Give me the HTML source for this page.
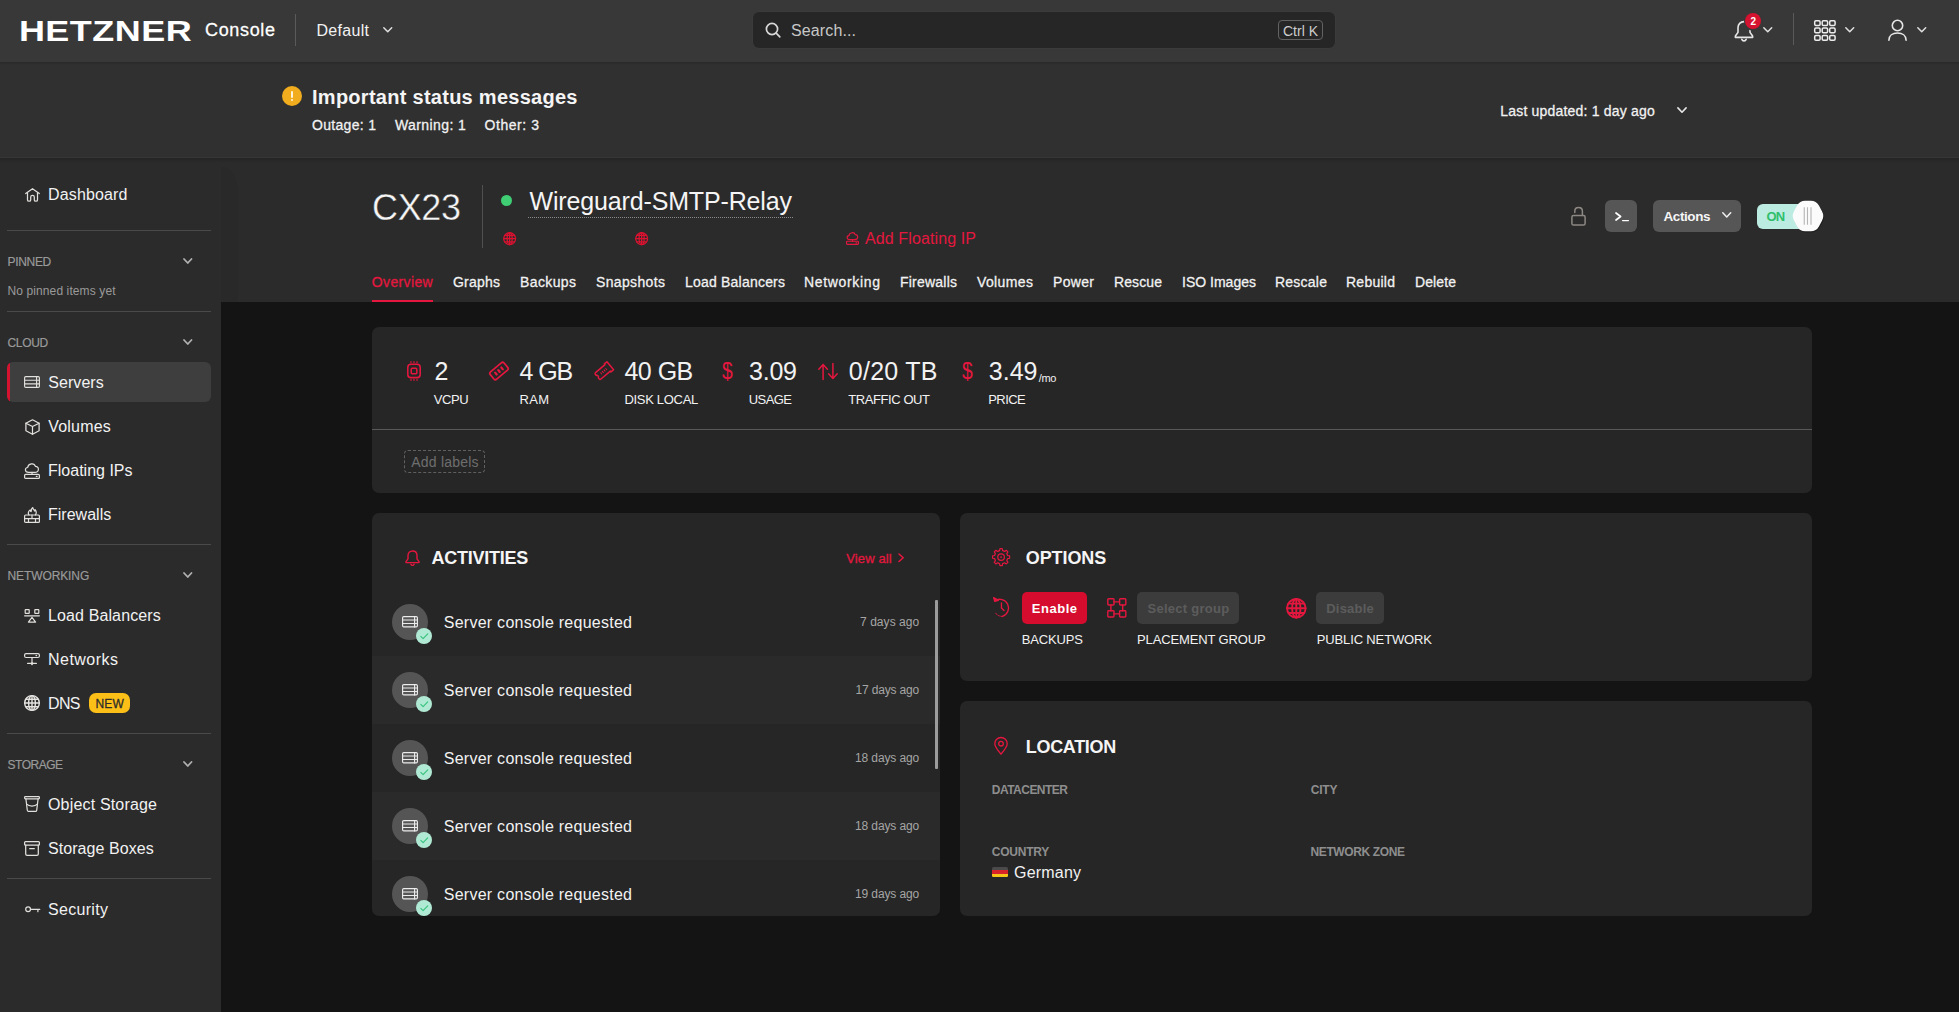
<!DOCTYPE html>
<html lang="en">
<head>
<meta charset="utf-8">
<title>Hetzner Console</title>
<style>
*{box-sizing:border-box;margin:0;padding:0}
html,body{width:1959px;height:1012px;overflow:hidden;background:#141414}
body{font-family:"Liberation Sans",Arial,sans-serif;color:#f2f2f2;position:relative}
.a,.t{position:absolute;white-space:pre}
.t{line-height:1}
svg{position:absolute;overflow:visible;fill:none;stroke-linecap:round;stroke-linejoin:round}
.hr{position:absolute;left:7px;width:204px;height:1px;background:#4a4a4a}
.card{position:absolute;background:#262626;border-radius:7px}
.row{position:absolute;left:372px;width:568px;height:68px}
.av{position:absolute;left:392px;width:36px;height:36px;border-radius:18px;background:#555}
.bd{position:absolute;left:416px;width:16px;height:16px;border-radius:8px;background:#b0ead5}
.btn{position:absolute;height:32px;top:592px;border-radius:5px}
</style>
</head>
<body>
<!-- backgrounds -->
<div class="a" style="left:0;top:0;width:1959px;height:62px;background:#383838"></div>
<div class="a" style="left:0;top:62px;width:1959px;height:96px;background:#303030"></div>
<div class="a" style="left:0;top:62px;width:1959px;height:3px;background:linear-gradient(rgba(0,0,0,.16),rgba(0,0,0,0))"></div>
<div class="a" style="left:0;top:158px;width:1959px;height:144px;background:#2b2b2b"></div>
<div class="a" style="left:0;top:158px;width:221px;height:854px;background:#2b2b2b"></div>
<div class="a" style="left:0;top:158px;width:1959px;height:5px;background:linear-gradient(rgba(0,0,0,.16),rgba(0,0,0,0))"></div>
<div class="a" style="left:221px;top:166.500px;width:16.700px;height:135.500px;background:#292929;border-top-right-radius:16px 26px"></div>

<div class="a" style="left:0;top:157px;width:1959px;height:1px;background:#363636"></div>
<!-- TOPBAR -->
<svg style="left:0;top:0" width="220" height="61" viewBox="0 0 220 61"><text x="0" y="0" transform="translate(18.9 40.7) scale(1.184 1)" font-family="Liberation Sans, Arial, sans-serif" font-size="30.4" font-weight="bold" letter-spacing=".4" fill="#fff" stroke="none">HETZNER</text></svg>
<div class="a" style="left:295px;top:14px;width:1px;height:32px;background:#5a5a5a"></div>
<svg style="left:382.5px;top:27px" width="9.5" height="5.5" viewBox="0 0 9.5 5.5"><path d="M.8 .8l3.95 3.9L8.7 .8" stroke="#e0e0e0" stroke-width="1.5"/></svg>
<div class="a" style="left:753px;top:12px;width:582px;height:36px;background:#262626;border-radius:6px;box-shadow:0 0 0 .5px #3e3e3e"></div>
<svg style="left:765px;top:22px" width="16" height="16" viewBox="0 0 16 16"><circle cx="7" cy="7" r="5.6" stroke="#d8d8d8" stroke-width="1.7"/><path d="M11.2 11.2L14.8 14.8" stroke="#d8d8d8" stroke-width="1.7"/></svg>
<div class="a" style="left:1278px;top:20px;width:45px;height:20px;border:1px solid #626262;border-radius:4px"></div>
<!-- bell -->
<svg style="left:1734px;top:20px" width="20" height="22" viewBox="0 0 20 22"><path d="M10 1.6c-3.6 0-6 2.7-6 6.2v4.6L1.4 16v1.4h17.2V16L16 12.4V7.8c0-3.5-2.400-6.200-6-6.200z" stroke="#e6e6e6" stroke-width="1.6"/><path d="M7.8 19.200a2.300 2.300 0 0 0 4.400 0" stroke="#e6e6e6" stroke-width="1.6"/></svg>
<div class="a" style="left:1743.5px;top:11.500px;width:19px;height:19px;border-radius:10px;background:#383838"></div>
<div class="a" style="left:1745.200px;top:13px;width:15.600px;height:15.600px;border-radius:8px;background:#d5122f"></div>
<svg style="left:1763px;top:27px" width="9.5" height="5.5" viewBox="0 0 9.5 5.5"><path d="M.8 .8l3.950 3.900L8.700 .8" stroke="#e0e0e0" stroke-width="1.500"/></svg>
<div class="a" style="left:1793px;top:13px;width:1px;height:32px;background:#5a5a5a"></div>
<!-- grid -->
<svg style="left:1814px;top:19.500px" width="22" height="21" viewBox="0 0 22 21" stroke="#ececec" stroke-width="1.500">
<rect x=".7" y=".7" width="5.400" height="4.700" rx="1.200"/><rect x="8.200" y=".7" width="5.400" height="4.700" rx="1.200"/><rect x="15.700" y=".7" width="5.400" height="4.700" rx="1.200"/>
<rect x=".7" y="8.100" width="5.400" height="4.700" rx="1.200"/><rect x="8.200" y="8.100" width="5.400" height="4.700" rx="1.200"/><rect x="15.700" y="8.100" width="5.400" height="4.700" rx="1.200"/>
<rect x=".7" y="15.500" width="5.400" height="4.700" rx="1.200"/><rect x="8.200" y="15.500" width="5.400" height="4.700" rx="1.200"/><rect x="15.700" y="15.500" width="5.400" height="4.700" rx="1.200"/>
</svg>
<svg style="left:1844.500px;top:27px" width="9.5" height="5.5" viewBox="0 0 9.5 5.5"><path d="M.8 .8l3.950 3.900L8.700 .8" stroke="#e0e0e0" stroke-width="1.500"/></svg>
<!-- user -->
<svg style="left:1888px;top:18.500px" width="19" height="22" viewBox="0 0 19 22" stroke="#e6e6e6" stroke-width="1.600"><circle cx="9.500" cy="6.500" r="5.200"/><path d="M.9 21.200c0-4.600 3.800-7.200 8.600-7.200s8.600 2.600 8.600 7.200"/></svg>
<svg style="left:1916.500px;top:27px" width="9.5" height="5.5" viewBox="0 0 9.5 5.5"><path d="M.8 .8l3.950 3.900L8.700 .8" stroke="#e0e0e0" stroke-width="1.500"/></svg>

<!-- STATUS -->
<div class="a" style="left:282px;top:86px;width:20px;height:20px;border-radius:10px;background:#f2ad1e"></div>
<div class="a" style="left:291px;top:90.500px;width:2px;height:7px;background:#fff4d8;border-radius:1px"></div>
<div class="a" style="left:291px;top:99px;width:2px;height:2px;background:#fff4d8;border-radius:1px"></div>
<svg style="left:1677px;top:106.500px" width="10" height="6.500" viewBox="0 0 10 6.500"><path d="M.9 .9l4.100 4.300L9.100 .9" stroke="#e6e6e6" stroke-width="1.600"/></svg>

<!-- SIDEBAR -->
<div class="hr" style="top:230px"></div>
<div class="hr" style="top:311px"></div>
<div class="hr" style="top:544px"></div>
<div class="hr" style="top:733px"></div>
<div class="hr" style="top:878px"></div>
<div class="a" style="left:7px;top:362px;width:204px;height:40px;background:#3e3e3e;border-radius:6px;overflow:hidden"><div class="a" style="left:0;top:0;width:3px;height:40px;background:#d5122f"></div></div>
<div class="a" style="left:89px;top:692.800px;width:41px;height:20.200px;background:#fbbf18;border-radius:7px"></div>
<!-- section chevrons -->
<svg style="left:182.500px;top:257.700px" width="9.500" height="6.500" viewBox="0 0 9.500 6.500"><path d="M1 1l3.750 4L8.500 1" stroke="#b0b0b0" stroke-width="1.800"/></svg>
<svg style="left:182.500px;top:338.700px" width="9.500" height="6.500" viewBox="0 0 9.500 6.500"><path d="M1 1l3.750 4L8.500 1" stroke="#b0b0b0" stroke-width="1.800"/></svg>
<svg style="left:182.500px;top:571.700px" width="9.500" height="6.500" viewBox="0 0 9.500 6.500"><path d="M1 1l3.750 4L8.500 1" stroke="#b0b0b0" stroke-width="1.800"/></svg>
<svg style="left:182.500px;top:760.700px" width="9.500" height="6.500" viewBox="0 0 9.500 6.500"><path d="M1 1l3.750 4L8.500 1" stroke="#b0b0b0" stroke-width="1.800"/></svg>
<!-- home -->
<svg style="left:24.500px;top:187.500px" width="15" height="14" viewBox="0 0 15 14" stroke="#e2e0dd" stroke-width="1.250"><path d="M.7 5.600L7.500 .7l6.800 4.900"/><path d="M2.500 4.900v7c0 1.700 3.200 1.700 3.200 0V9c0-2.200 3.600-2.200 3.600 0v2.900c0 1.700 3.200 1.700 3.200 0v-7"/></svg>
<!-- servers -->
<svg style="left:24px;top:376px" width="16" height="12" viewBox="0 0 16 12" stroke="#e2e0dd" stroke-width="1.150"><rect x=".6" y=".6" width="14.800" height="10.800" rx="1.200"/><path d="M.6 4.200h14.800M.6 7.800h14.800M12.600 .6v10.800"/></svg>
<!-- volumes cube -->
<svg style="left:24.500px;top:418.500px" width="15" height="16" viewBox="0 0 15 16" stroke="#e2e0dd" stroke-width="1.250"><path d="M7.500 .8l6.600 3.400v7.600l-6.600 3.400-6.600-3.400V4.200z"/><path d="M.9 4.200l6.600 3.300 6.600-3.300M7.500 7.500v7.700"/></svg>
<!-- floating ip -->
<svg style="left:24px;top:462.500px" width="16" height="16" viewBox="0 0 16 16" stroke="#e2e0dd" stroke-width="1.200"><path d="M4.600 9.400c-4.200 0-4-4.600-.9-4.900C4.200 .3 10.200-.6 11.400 3.300c4.200.4 4 6.100-.6 6.100z"/><path d="M8 9.400v2"/><rect x=".6" y="11.400" width="14.800" height="4" rx="1"/><path d="M12.300 13.400h.8"/></svg>
<!-- firewall -->
<svg style="left:24px;top:506.500px" width="16" height="16" viewBox="0 0 16 16" stroke="#e2e0dd" stroke-width="1.200"><path d="M5 8c-1.700-2.600.2-4.400 1.100-5.100.1 1 .6 1.500 1.100 1.700C7.100 3 7.700 1.400 8.800.6c.1 1.700 1.300 2.300 1.900 3.500.3-.4.400-.9.400-1.400 1.300 1.500 1.500 3.500.3 5.300"/><rect x=".6" y="8" width="14.800" height="7.400" rx="1"/><path d="M.6 11.700h14.800M8 8v3.700M4.500 11.700v3.700M11.500 11.700v3.700"/></svg>
<!-- load balancer -->
<svg style="left:24px;top:608.500px" width="16" height="14" viewBox="0 0 16 14" stroke="#e2e0dd" stroke-width="1.200"><rect x="1.200" y=".6" width="4" height="3.800" rx=".5"/><rect x="10.800" y=".6" width="4" height="3.800" rx=".5"/><path d="M.6 6.800h14.800M8 8.400l3.600 4.700H4.400z"/></svg>
<!-- networks -->
<svg style="left:24px;top:653px" width="16" height="13" viewBox="0 0 16 13" stroke="#e2e0dd" stroke-width="1.200"><rect x=".6" y=".6" width="14.800" height="3.900" rx="1.500"/><path d="M12 2.550h.6M8 4.500v5.800M3.600 10.400h8.800M6.900 10.400l1.100-1.100 1.100 1.100-1.100 1.100z"/></svg>
<!-- dns globe -->
<svg style="left:24px;top:694.800px" width="16" height="16" viewBox="0 0 16 16" stroke="#e6e4e1" stroke-width="1.400"><circle cx="8" cy="8" r="7.350"/><ellipse cx="8" cy="8" rx="3.400" ry="7.350"/><path d="M8 .6v14.800M.6 8h14.800M1.700 4.300h12.600M1.700 11.700h12.600"/></svg>
<!-- bucket -->
<svg style="left:24px;top:796px" width="16" height="16" viewBox="0 0 16 16" stroke="#e2e0dd" stroke-width="1.200"><rect x=".6" y=".6" width="14.800" height="2.300" rx=".8"/><path d="M1.900 2.900l1.400 11.400c.1.700.5 1.100 1.200 1.100h7c.7 0 1.100-.4 1.200-1.100l1.400-11.400"/><path d="M2.600 8.200c2.600 2.600 8.200 2.600 10.800 0"/></svg>
<!-- box -->
<svg style="left:24px;top:840.500px" width="16" height="15" viewBox="0 0 16 15" stroke="#e2e0dd" stroke-width="1.250"><rect x=".6" y=".6" width="14.800" height="3.600" rx="1"/><path d="M1.700 4.200v8.700c0 .9.500 1.400 1.400 1.400h9.800c.9 0 1.400-.5 1.400-1.400V4.200M5.700 7.700h4.600"/></svg>
<!-- key -->
<svg style="left:24.500px;top:905.500px" width="16" height="7" viewBox="0 0 16 7" stroke="#e2e0dd" stroke-width="1.200"><circle cx="3.100" cy="3.300" r="2.400"/><path d="M5.500 3.300h9.300M12.900 3.300v2.400"/></svg>

<!-- MAIN HEADER -->
<div class="a" style="left:482px;top:185px;width:1px;height:62.500px;background:#505050"></div>
<div class="a" style="left:500.900px;top:194.800px;width:11.400px;height:11.400px;border-radius:6px;background:#3fce74"></div>
<div class="a" style="left:528px;top:217px;width:265px;height:0;border-top:1px dotted #8c8c8c"></div>
<!-- red globes -->
<svg style="left:502.900px;top:231.900px" width="13.300" height="13.300" viewBox="0 0 13.300 13.300" stroke="#dc1230" stroke-width="1.250"><circle cx="6.650" cy="6.650" r="5.900"/><ellipse cx="6.650" cy="6.650" rx="2.500" ry="5.900"/><path d="M6.650 .7v11.900M.7 6.650h11.900M1.600 3.500h10.100M1.600 9.800h10.100"/></svg>
<svg style="left:634.900px;top:231.900px" width="13.300" height="13.300" viewBox="0 0 13.300 13.300" stroke="#dc1230" stroke-width="1.250"><circle cx="6.650" cy="6.650" r="5.900"/><ellipse cx="6.650" cy="6.650" rx="2.500" ry="5.900"/><path d="M6.650 .7v11.900M.7 6.650h11.900M1.600 3.500h10.100M1.600 9.800h10.100"/></svg>
<!-- add floating ip icon -->
<svg style="left:846px;top:232px" width="13" height="13" viewBox="0 0 16 16" stroke="#e5173f" stroke-width="1.400"><path d="M4.600 9.400c-4.200 0-4-4.600-.9-4.900C4.200 .3 10.200-.6 11.400 3.300c4.200.4 4 6.100-.6 6.100z"/><path d="M8 9.400v2"/><rect x=".7" y="11.400" width="14.600" height="3.900" rx="1"/><path d="M12.300 13.400h.8"/></svg>
<!-- active tab underline -->
<div class="a" style="left:372px;top:300px;width:61px;height:2px;background:#e5173f"></div>
<!-- lock -->
<svg style="left:1571px;top:206px" width="15" height="20" viewBox="0 0 15 20" stroke="#8d8884" stroke-width="1.500"><rect x=".9" y="9.600" width="13.200" height="9.500" rx="1.600"/><path d="M11.400 9.600V5.200C11.400 .3 3.800 .3 3.800 5.200v1.200"/></svg>
<!-- console button -->
<div class="a" style="left:1605px;top:200px;width:32px;height:32px;background:#565656;border-radius:6px"></div>
<svg style="left:1615px;top:211.500px" width="14" height="10" viewBox="0 0 14 10" stroke="#ffffff" stroke-width="1.700" stroke-linecap="butt" stroke-linejoin="miter"><path d="M1 1l4.600 3.500L1 8"/><path d="M7.600 8.600h5.800" stroke-width="1.400"/></svg>
<!-- actions button -->
<div class="a" style="left:1653px;top:200px;width:88px;height:32px;background:#565656;border-radius:6px"></div>
<svg style="left:1721.500px;top:212.300px" width="9.500" height="6" viewBox="0 0 9.500 6"><path d="M.8 .8l3.950 4.100L8.700 .8" stroke="#f0f0f0" stroke-width="1.500"/></svg>
<!-- toggle -->
<div class="a" style="left:1756.500px;top:204px;width:62px;height:24.500px;background:#bcebe1;border-radius:6px"></div>
<svg style="left:1787.75px;top:196.75px" width="40" height="38" viewBox="0 0 40 38"><path d="M33.97 14.17Q36.60 19.00 33.97 23.83L30.93 29.41Q28.30 34.24 22.80 34.24L17.20 34.24Q11.70 34.24 9.07 29.41L6.03 23.83Q3.40 19.00 6.03 14.17L9.07 8.59Q11.70 3.76 17.20 3.76L22.80 3.76Q28.30 3.76 30.93 8.59z" fill="rgba(0,0,0,.28)" transform="translate(.8 1.2)"/><path d="M33.97 14.17Q36.60 19.00 33.97 23.83L30.93 29.41Q28.30 34.24 22.80 34.24L17.20 34.24Q11.70 34.24 9.07 29.41L6.03 23.83Q3.40 19.00 6.03 14.17L9.07 8.59Q11.70 3.76 17.20 3.76L22.80 3.76Q28.30 3.76 30.93 8.59z" fill="#fbfbfb"/><path d="M16.250 10.300v17.400M19.500 10.300v17.400M23 10.300v17.400" stroke="#b5b5b5" stroke-width="1.100" stroke-linecap="butt"/></svg>

<!-- STATS CARD -->
<div class="card" style="left:372px;top:327px;width:1440px;height:165.500px"></div>
<div class="a" style="left:372px;top:429px;width:1440px;height:1px;background:#585858"></div>
<div class="a" style="left:404px;top:450px;width:81px;height:23px;border:1px dashed #606060;border-radius:4px"></div>
<!-- cpu -->
<svg style="left:407px;top:361px" width="14" height="20" viewBox="0 0 14 20" stroke="#e5173f" stroke-width="1.550"><rect x=".8" y="3.200" width="12.400" height="13.400" rx="3.200"/><rect x="4.200" y="7.200" width="5.600" height="5.600" rx="1"/><path d="M4 .6v1.200M7 .6v1.200M10 .6v1.200M4 18.200v1.200M7 18.200v1.200M10 18.200v1.200" stroke-width="1.100"/></svg>
<!-- ram -->
<svg style="left:489px;top:360.900px" width="20" height="20" viewBox="0 0 20 20" stroke="#e5173f" stroke-width="1.700"><g transform="rotate(-40 10 10)"><rect x="1" y="5.200" width="18" height="9.600" rx="2"/><path d="M6 8.800v2.400M10 8.800v2.400M14 8.800v2.400" stroke-width="2.200"/></g></svg>
<!-- disk -->
<svg style="left:594px;top:361px" width="20" height="20" viewBox="0 0 20 20" stroke="#e5173f" stroke-width="1.500"><g transform="rotate(-40 10 10)"><path d="M2.500 5.800h12.300v-1h3.400v10.400h-3.400v-1H2.500c-.8 0-1.300-.5-1.300-1.300v-1.300c1.500-.4 1.500-2.800 0-3.200V7.100c0-.8.500-1.300 1.300-1.300z"/><path d="M6.300 9.200v1.600M8.500 9.200v1.600M10.700 9.200v1.600M12.900 9.200v1.600" stroke-width="1"/></g></svg>
<span class="t" style="left:722.2px;top:359px;font-size:24px;color:#e5173f;transform:scaleX(.8);transform-origin:0 0">$</span>
<span class="t" style="left:962.2px;top:359px;font-size:24px;color:#e5173f;transform:scaleX(.8);transform-origin:0 0">$</span>
<!-- arrows -->
<svg style="left:818px;top:362.500px" width="20" height="17" viewBox="0 0 20 17" stroke="#e5173f" stroke-width="1.500" stroke-linecap="butt" stroke-linejoin="miter"><path d="M5.100 16.500V1.600M.8 6.200l4.300-4.600 4.300 4.600"/><path d="M14.900 .5v14.900M10.600 10.800l4.300 4.600 4.300-4.600"/></svg>

<!-- ACTIVITIES CARD -->
<div class="card" style="left:372px;top:512.500px;width:567.500px;height:403px;overflow:hidden"></div>
<div class="row" style="top:656px;background:#2a2a2a;width:567.500px"></div>
<div class="row" style="top:792px;background:#2a2a2a;width:567.500px"></div>
<div class="a" style="left:935px;top:600px;width:2.500px;height:168.500px;background:#9c9c9c;border-radius:1px"></div>
<!-- bell red -->
<svg style="left:404.500px;top:550px" width="15" height="16" viewBox="0 0 15 16" stroke="#e5173f" stroke-width="1.400"><path d="M7.500 1c-2.700 0-4.500 2-4.500 4.600v3.300L1 11.600v1h13v-1l-2-2.700V5.600C12 3 10.200 1 7.500 1z"/><path d="M5.900 14.200a1.700 1.700 0 0 0 3.200 0"/></svg>
<svg style="left:898.200px;top:553.200px" width="6.500" height="9.500" viewBox="0 0 6.500 9.500"><path d="M1 1l4.200 3.750L1 8.500" stroke="#e5173f" stroke-width="1.600"/></svg>
<!-- activity rows -->
<div class="av" style="top:603.75px"></div>
<svg style="left:402px;top:616.15px" width="16" height="11.500" viewBox="0 0 16 11.500" stroke="#ececec" stroke-width="1.150"><rect x=".6" y=".6" width="14.800" height="10.300" rx="1.200"/><path d="M.6 4h14.800M.6 7.500h14.800M12.600 .6v10.300"/></svg>
<div class="bd" style="top:628.00px"></div>
<svg style="left:419.800px;top:633.15px" width="8.500" height="6.500" viewBox="0 0 8.500 6.500"><path d="M.8 3.400l2.300 2.200L7.700 .9" stroke="#35c27a" stroke-width="1.100"/></svg>
<div class="av" style="top:671.75px"></div>
<svg style="left:402px;top:684.15px" width="16" height="11.500" viewBox="0 0 16 11.500" stroke="#ececec" stroke-width="1.150"><rect x=".6" y=".6" width="14.800" height="10.300" rx="1.200"/><path d="M.6 4h14.800M.6 7.500h14.800M12.600 .6v10.300"/></svg>
<div class="bd" style="top:696.00px"></div>
<svg style="left:419.800px;top:701.15px" width="8.500" height="6.500" viewBox="0 0 8.500 6.500"><path d="M.8 3.400l2.300 2.200L7.700 .9" stroke="#35c27a" stroke-width="1.100"/></svg>
<div class="av" style="top:739.75px"></div>
<svg style="left:402px;top:752.15px" width="16" height="11.500" viewBox="0 0 16 11.500" stroke="#ececec" stroke-width="1.150"><rect x=".6" y=".6" width="14.800" height="10.300" rx="1.200"/><path d="M.6 4h14.800M.6 7.500h14.800M12.600 .6v10.300"/></svg>
<div class="bd" style="top:764.00px"></div>
<svg style="left:419.800px;top:769.15px" width="8.500" height="6.500" viewBox="0 0 8.500 6.500"><path d="M.8 3.400l2.300 2.200L7.700 .9" stroke="#35c27a" stroke-width="1.100"/></svg>
<div class="av" style="top:807.75px"></div>
<svg style="left:402px;top:820.15px" width="16" height="11.500" viewBox="0 0 16 11.500" stroke="#ececec" stroke-width="1.150"><rect x=".6" y=".6" width="14.800" height="10.300" rx="1.200"/><path d="M.6 4h14.800M.6 7.500h14.800M12.600 .6v10.300"/></svg>
<div class="bd" style="top:832.00px"></div>
<svg style="left:419.800px;top:837.15px" width="8.500" height="6.500" viewBox="0 0 8.500 6.500"><path d="M.8 3.400l2.300 2.200L7.700 .9" stroke="#35c27a" stroke-width="1.100"/></svg>
<div class="av" style="top:875.75px"></div>
<svg style="left:402px;top:888.15px" width="16" height="11.500" viewBox="0 0 16 11.500" stroke="#ececec" stroke-width="1.150"><rect x=".6" y=".6" width="14.800" height="10.300" rx="1.200"/><path d="M.6 4h14.800M.6 7.500h14.800M12.600 .6v10.300"/></svg>
<div class="bd" style="top:900.00px"></div>
<svg style="left:419.800px;top:905.15px" width="8.500" height="6.500" viewBox="0 0 8.500 6.500"><path d="M.8 3.400l2.300 2.200L7.700 .9" stroke="#35c27a" stroke-width="1.100"/></svg>

<!-- OPTIONS CARD -->
<div class="card" style="left:960px;top:512.500px;width:852px;height:168px"></div>
<svg style="left:991.900px;top:547.900px" width="18.200" height="18.200" viewBox="0 0 18.200 18.200" stroke="#e5173f" stroke-width="1.200"><path d="M7.54 2.59L7.96 0.58L10.24 0.58L10.66 2.59L12.60 3.39L14.32 2.26L15.94 3.88L14.81 5.60L15.61 7.54L17.62 7.96L17.62 10.24L15.61 10.66L14.81 12.60L15.94 14.32L14.32 15.94L12.60 14.81L10.66 15.61L10.24 17.62L7.96 17.62L7.54 15.61L5.60 14.81L3.88 15.94L2.26 14.32L3.39 12.60L2.59 10.66L0.58 10.24L0.58 7.96L2.59 7.54L3.39 5.60L2.26 3.88L3.88 2.26L5.60 3.39z"/><circle cx="9.100" cy="9.100" r="3.300"/><circle cx="9.100" cy="9.100" r=".9" fill="#e5173f" stroke="none"/></svg>
<!-- backups history icon -->
<svg style="left:991.900px;top:596.400px" width="19.800" height="22" viewBox="0 0 18 20" stroke="#e5173f" stroke-width="1.250"><path d="M2.600 4.300A8 8 0 1 1 9.400 18.600"/><path d="M9.400 18.600A8 8 0 0 1 3 15.300" stroke-width=".9" stroke-dasharray="1.500 1.200"/><path d="M1.500 1.500l1 3.300 3.300-.8z" fill="#e5173f"/><path d="M8.600 6.300v4.600l2.300 2.300"/></svg>
<div class="btn" style="left:1022px;width:65px;background:#d50c2d"></div>
<!-- placement icon -->
<svg style="left:1107.300px;top:598.200px" width="19.600" height="19.800" viewBox="0 0 19.600 19.800" stroke="#e5173f" stroke-width="1.400"><rect x=".8" y=".8" width="6.200" height="6.200" rx=".8"/><rect x="12.600" y=".8" width="6.200" height="6.200" rx=".8"/><rect x=".8" y="12.800" width="6.200" height="6.200" rx=".8"/><rect x="12.600" y="12.800" width="6.200" height="6.200" rx=".8"/><path d="M7 3.900h5.600M7 15.900h5.600M3.900 7v5.800M15.700 7v5.800"/></svg>
<div class="btn" style="left:1137px;width:102px;background:#3c3c3c"></div>
<!-- public network globe -->
<svg style="left:1285.700px;top:597.700px" width="20.600" height="20.600" viewBox="0 0 20.600 20.600" stroke="#e5173f" stroke-width="1.900"><circle cx="10.300" cy="10.300" r="9.300"/><ellipse cx="10.300" cy="10.300" rx="4.200" ry="9.300"/><path d="M10.300 1v18.600M1 10.300h18.600M2.400 5.600h15.800M2.400 15h15.800"/></svg>
<div class="btn" style="left:1316.300px;width:67.500px;background:#3c3c3c"></div>

<!-- LOCATION CARD -->
<div class="card" style="left:960px;top:701px;width:852px;height:214.500px"></div>
<svg style="left:993.700px;top:736.700px" width="14" height="18" viewBox="0 0 14 18" stroke="#e5173f" stroke-width="1.300"><path d="M7 17.200C3.200 12.600.8 9.700.8 6.700a6.200 6.200 0 0 1 12.400 0c0 3-2.400 5.900-6.200 10.500z"/><circle cx="7" cy="6.700" r="2.300"/></svg>
<!-- flag -->
<div class="a" style="left:992px;top:866.500px;width:16px;height:10.500px;border-radius:1.500px;overflow:hidden;background:#4a4a4a"><div class="a" style="left:0;top:3.500px;width:16px;height:3.500px;background:#d8232a"></div><div class="a" style="left:0;top:7px;width:16px;height:3.500px;background:#f5c518"></div></div>
<!-- clip below activities card -->
<div class="a" style="left:372px;top:915.500px;width:568px;height:8px;background:#141414"></div>

<!-- text -->
<span class="t" style="left:205.00px;top:21.01px;font-size:18px;color:#ffffff;letter-spacing:0.659px;-webkit-text-stroke:.27px #ffffff">Console</span>
<span class="t" style="left:316.50px;top:22.51px;font-size:16px;color:#f2f2f2;letter-spacing:0.299px">Default</span>
<span class="t" style="left:791.00px;top:22.51px;font-size:16px;color:#c8c8c8;letter-spacing:0.121px">Search...</span>
<span class="t" style="left:1283.00px;top:24.01px;font-size:14px;color:#cccccc;letter-spacing:0.000px">Ctrl K</span>
<span class="t" style="left:1750.50px;top:16.51px;font-size:10px;color:#ffffff;letter-spacing:0.000px;font-weight:bold">2</span>
<span class="t" style="left:312.00px;top:87.01px;font-size:20px;color:#f5f5f5;letter-spacing:0.271px;font-weight:bold">Important status messages</span>
<span class="t" style="left:312.00px;top:118.01px;font-size:14px;color:#f2f2f2;letter-spacing:0.312px;-webkit-text-stroke:.27px #f2f2f2">Outage: 1</span>
<span class="t" style="left:395.00px;top:118.01px;font-size:14px;color:#f2f2f2;letter-spacing:0.396px;-webkit-text-stroke:.27px #f2f2f2">Warning: 1</span>
<span class="t" style="left:484.50px;top:118.01px;font-size:14px;color:#f2f2f2;letter-spacing:0.558px;-webkit-text-stroke:.27px #f2f2f2">Other: 3</span>
<span class="t" style="left:1500.25px;top:104.01px;font-size:14px;color:#f2f2f2;letter-spacing:0.194px;-webkit-text-stroke:.27px #f2f2f2">Last updated: 1 day ago</span>
<span class="t" style="left:48.00px;top:186.51px;font-size:16px;color:#f2f2f2;letter-spacing:0.152px">Dashboard</span>
<span class="t" style="left:7.50px;top:256.01px;font-size:12px;color:#9a9a9a;letter-spacing:-0.319px;-webkit-text-stroke:.18px #9a9a9a">PINNED</span>
<span class="t" style="left:7.50px;top:285.01px;font-size:12px;color:#9a9a9a;letter-spacing:0.108px">No pinned items yet</span>
<span class="t" style="left:7.50px;top:337.01px;font-size:12px;color:#9a9a9a;letter-spacing:-0.316px;-webkit-text-stroke:.18px #9a9a9a">CLOUD</span>
<span class="t" style="left:48.25px;top:374.51px;font-size:16px;color:#f2f2f2;letter-spacing:0.062px">Servers</span>
<span class="t" style="left:48.25px;top:418.51px;font-size:16px;color:#f2f2f2;letter-spacing:0.188px">Volumes</span>
<span class="t" style="left:48.00px;top:462.51px;font-size:16px;color:#f2f2f2;letter-spacing:0.001px">Floating IPs</span>
<span class="t" style="left:48.00px;top:506.51px;font-size:16px;color:#f2f2f2;letter-spacing:0.016px">Firewalls</span>
<span class="t" style="left:7.50px;top:570.01px;font-size:12px;color:#9a9a9a;letter-spacing:-0.102px;-webkit-text-stroke:.18px #9a9a9a">NETWORKING</span>
<span class="t" style="left:48.00px;top:607.51px;font-size:16px;color:#f2f2f2;letter-spacing:0.120px">Load Balancers</span>
<span class="t" style="left:48.00px;top:651.51px;font-size:16px;color:#f2f2f2;letter-spacing:0.473px">Networks</span>
<span class="t" style="left:48.00px;top:695.51px;font-size:16px;color:#f2f2f2;letter-spacing:-0.641px">DNS</span>
<span class="t" style="left:95.50px;top:698.01px;font-size:12px;color:#2b2b2b;letter-spacing:0.125px;-webkit-text-stroke:.27px #2b2b2b">NEW</span>
<span class="t" style="left:7.50px;top:759.01px;font-size:12px;color:#9a9a9a;letter-spacing:-0.495px;-webkit-text-stroke:.18px #9a9a9a">STORAGE</span>
<span class="t" style="left:48.00px;top:796.51px;font-size:16px;color:#f2f2f2;letter-spacing:0.174px">Object Storage</span>
<span class="t" style="left:48.00px;top:840.51px;font-size:16px;color:#f2f2f2;letter-spacing:0.066px">Storage Boxes</span>
<span class="t" style="left:48.00px;top:901.51px;font-size:16px;color:#f2f2f2;letter-spacing:0.315px">Security</span>
<span class="t" style="left:372.10px;top:189.51px;font-size:36px;color:#f5f5f5;letter-spacing:-0.388px;-webkit-text-stroke:.4px #2b2b2b">CX23</span>
<span class="t" style="left:529.50px;top:188.51px;font-size:25px;color:#f5f5f5;letter-spacing:-0.150px">Wireguard-SMTP-Relay</span>
<span class="t" style="left:865.00px;top:230.51px;font-size:16px;color:#e5173f;letter-spacing:0.114px">Add Floating IP</span>
<span class="t" style="left:1663.50px;top:209.76px;font-size:13.5px;color:#f5f5f5;letter-spacing:-0.419px;font-weight:bold">Actions</span>
<span class="t" style="left:1766.50px;top:210.01px;font-size:13px;color:#2fbf6c;letter-spacing:-0.750px;font-weight:bold">ON</span>
<span class="t" style="left:434.50px;top:358.51px;font-size:25px;color:#f2f2f2;letter-spacing:0.000px">2</span>
<span class="t" style="left:433.75px;top:393.01px;font-size:13px;color:#f2f2f2;letter-spacing:-0.375px">VCPU</span>
<span class="t" style="left:519.50px;top:358.51px;font-size:25px;color:#f2f2f2;letter-spacing:-1.078px">4 GB</span>
<span class="t" style="left:519.50px;top:393.01px;font-size:13px;color:#f2f2f2;letter-spacing:0.305px">RAM</span>
<span class="t" style="left:624.50px;top:358.51px;font-size:25px;color:#f2f2f2;letter-spacing:-0.531px">40 GB</span>
<span class="t" style="left:624.50px;top:393.01px;font-size:13px;color:#f2f2f2;letter-spacing:-0.316px">DISK LOCAL</span>
<span class="t" style="left:749.00px;top:358.51px;font-size:25px;color:#f2f2f2;letter-spacing:-0.224px">3.09</span>
<span class="t" style="left:748.75px;top:393.01px;font-size:13px;color:#f2f2f2;letter-spacing:-0.566px">USAGE</span>
<span class="t" style="left:848.75px;top:358.51px;font-size:25px;color:#f2f2f2;letter-spacing:0.273px">0/20 TB</span>
<span class="t" style="left:848.25px;top:393.01px;font-size:13px;color:#f2f2f2;letter-spacing:-0.419px">TRAFFIC OUT</span>
<span class="t" style="left:988.75px;top:358.51px;font-size:25px;color:#f2f2f2;letter-spacing:0.026px">3.49</span>
<span class="t" style="left:1038.75px;top:372.51px;font-size:11px;color:#f2f2f2;letter-spacing:-0.422px">/mo</span>
<span class="t" style="left:988.25px;top:393.01px;font-size:13px;color:#f2f2f2;letter-spacing:-0.559px">PRICE</span>
<span class="t" style="left:411.25px;top:455.01px;font-size:14px;color:#6e6e6e;letter-spacing:0.207px">Add labels</span>
<span class="t" style="left:431.50px;top:549.01px;font-size:18px;color:#f5f5f5;letter-spacing:-0.252px;font-weight:bold">ACTIVITIES</span>
<span class="t" style="left:846.25px;top:552.01px;font-size:13px;color:#e5173f;letter-spacing:0.134px;-webkit-text-stroke:.27px #e5173f">View all</span>
<span class="t" style="left:1025.75px;top:549.01px;font-size:18px;color:#f5f5f5;letter-spacing:-0.086px;font-weight:bold">OPTIONS</span>
<span class="t" style="left:1031.75px;top:602.01px;font-size:13px;color:#ffffff;letter-spacing:0.525px;font-weight:bold">Enable</span>
<span class="t" style="left:1021.75px;top:633.01px;font-size:13px;color:#f2f2f2;letter-spacing:-0.148px">BACKUPS</span>
<span class="t" style="left:1147.50px;top:602.01px;font-size:13px;color:#5c5c5c;letter-spacing:0.273px;font-weight:bold">Select group</span>
<span class="t" style="left:1137.00px;top:633.01px;font-size:13px;color:#f2f2f2;letter-spacing:-0.126px">PLACEMENT GROUP</span>
<span class="t" style="left:1326.25px;top:602.01px;font-size:13px;color:#5c5c5c;letter-spacing:0.208px;font-weight:bold">Disable</span>
<span class="t" style="left:1316.75px;top:633.01px;font-size:13px;color:#f2f2f2;letter-spacing:-0.136px">PUBLIC NETWORK</span>
<span class="t" style="left:1025.75px;top:738.01px;font-size:18px;color:#f5f5f5;letter-spacing:-0.308px;font-weight:bold">LOCATION</span>
<span class="t" style="left:991.75px;top:784.01px;font-size:12px;color:#8e8e8e;letter-spacing:-0.516px;font-weight:bold">DATACENTER</span>
<span class="t" style="left:1310.75px;top:784.01px;font-size:12px;color:#8e8e8e;letter-spacing:-0.198px;font-weight:bold">CITY</span>
<span class="t" style="left:991.75px;top:846.01px;font-size:12px;color:#8e8e8e;letter-spacing:-0.232px;font-weight:bold">COUNTRY</span>
<span class="t" style="left:1310.50px;top:846.01px;font-size:12px;color:#8e8e8e;letter-spacing:-0.379px;font-weight:bold">NETWORK ZONE</span>
<span class="t" style="left:1014.10px;top:864.51px;font-size:16px;color:#f2f2f2;letter-spacing:0.184px">Germany</span>
<span class="t" style="left:371.75px;top:275.01px;font-size:14px;color:#e5173f;letter-spacing:0.377px;-webkit-text-stroke:.27px #e5173f">Overview</span>
<span class="t" style="left:453.00px;top:275.01px;font-size:14px;color:#f2f2f2;letter-spacing:0.216px;-webkit-text-stroke:.27px #f2f2f2">Graphs</span>
<span class="t" style="left:520.00px;top:275.01px;font-size:14px;color:#f2f2f2;letter-spacing:0.383px;-webkit-text-stroke:.27px #f2f2f2">Backups</span>
<span class="t" style="left:596.00px;top:275.01px;font-size:14px;color:#f2f2f2;letter-spacing:0.354px;-webkit-text-stroke:.27px #f2f2f2">Snapshots</span>
<span class="t" style="left:685.00px;top:275.01px;font-size:14px;color:#f2f2f2;letter-spacing:0.208px;-webkit-text-stroke:.27px #f2f2f2">Load Balancers</span>
<span class="t" style="left:804.00px;top:275.01px;font-size:14px;color:#f2f2f2;letter-spacing:0.663px;-webkit-text-stroke:.27px #f2f2f2">Networking</span>
<span class="t" style="left:900.00px;top:275.01px;font-size:14px;color:#f2f2f2;letter-spacing:0.221px;-webkit-text-stroke:.27px #f2f2f2">Firewalls</span>
<span class="t" style="left:977.00px;top:275.01px;font-size:14px;color:#f2f2f2;letter-spacing:0.383px;-webkit-text-stroke:.27px #f2f2f2">Volumes</span>
<span class="t" style="left:1053.00px;top:275.01px;font-size:14px;color:#f2f2f2;letter-spacing:0.328px;-webkit-text-stroke:.27px #f2f2f2">Power</span>
<span class="t" style="left:1114.00px;top:275.01px;font-size:14px;color:#f2f2f2;letter-spacing:0.106px;-webkit-text-stroke:.27px #f2f2f2">Rescue</span>
<span class="t" style="left:1182.00px;top:275.01px;font-size:14px;color:#f2f2f2;letter-spacing:0.009px;-webkit-text-stroke:.27px #f2f2f2">ISO Images</span>
<span class="t" style="left:1275.00px;top:275.01px;font-size:14px;color:#f2f2f2;letter-spacing:0.234px;-webkit-text-stroke:.27px #f2f2f2">Rescale</span>
<span class="t" style="left:1346.00px;top:275.01px;font-size:14px;color:#f2f2f2;letter-spacing:0.253px;-webkit-text-stroke:.27px #f2f2f2">Rebuild</span>
<span class="t" style="left:1415.00px;top:275.01px;font-size:14px;color:#f2f2f2;letter-spacing:0.106px;-webkit-text-stroke:.27px #f2f2f2">Delete</span>
<span class="t" style="left:443.75px;top:614.51px;font-size:16px;color:#f2f2f2;letter-spacing:0.257px">Server console requested</span>
<span class="t" style="left:860.00px;top:616.01px;font-size:12px;color:#a5a5a5;letter-spacing:0.059px">7 days ago</span>
<span class="t" style="left:443.75px;top:682.51px;font-size:16px;color:#f2f2f2;letter-spacing:0.257px">Server console requested</span>
<span class="t" style="left:855.50px;top:684.01px;font-size:12px;color:#a5a5a5;letter-spacing:-0.164px">17 days ago</span>
<span class="t" style="left:443.75px;top:750.51px;font-size:16px;color:#f2f2f2;letter-spacing:0.257px">Server console requested</span>
<span class="t" style="left:855.00px;top:752.01px;font-size:12px;color:#a5a5a5;letter-spacing:-0.114px">18 days ago</span>
<span class="t" style="left:443.75px;top:818.51px;font-size:16px;color:#f2f2f2;letter-spacing:0.257px">Server console requested</span>
<span class="t" style="left:855.00px;top:820.01px;font-size:12px;color:#a5a5a5;letter-spacing:-0.114px">18 days ago</span>
<span class="t" style="left:443.75px;top:886.51px;font-size:16px;color:#f2f2f2;letter-spacing:0.257px">Server console requested</span>
<span class="t" style="left:855.00px;top:888.01px;font-size:12px;color:#a5a5a5;letter-spacing:-0.114px">19 days ago</span>
</body>
</html>
